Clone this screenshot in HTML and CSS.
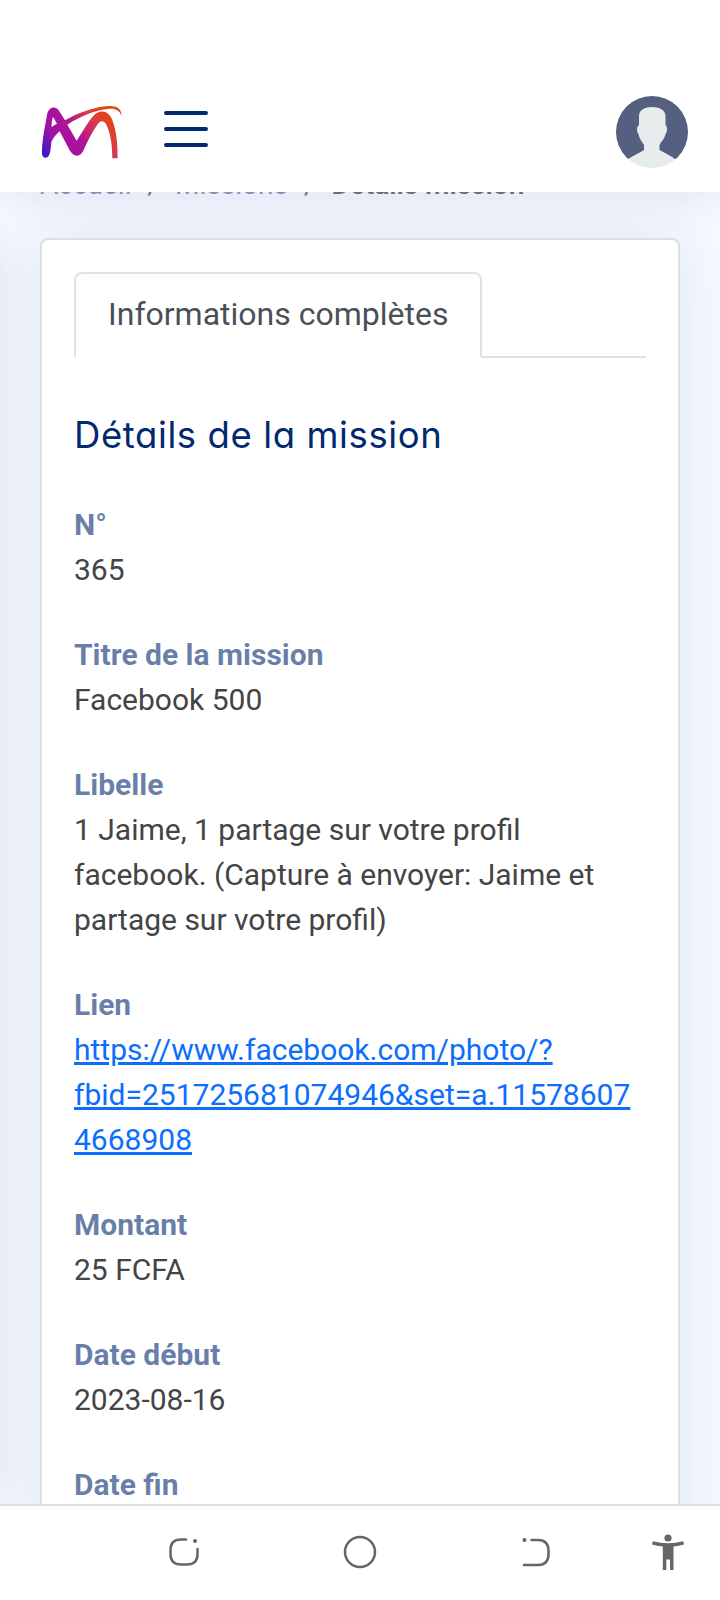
FILE: index.html
```html
<!DOCTYPE html>
<html lang="fr">
<head>
    <meta charset="utf-8">
    <title>Détails mission</title>
    <link rel="stylesheet" href="styles.css">
</head>
<body>
    <header class="header">
        <svg class="logo" viewBox="0 0 250 170">
            <defs>
                <linearGradient id="brand" gradientUnits="userSpaceOnUse" x1="5" y1="140" x2="190" y2="10">
                    <stop offset="0" stop-color="#3a1acb"/>
                    <stop offset=".25" stop-color="#a011a8"/>
                    <stop offset=".52" stop-color="#b01396"/>
                    <stop offset=".8" stop-color="#dc3b48"/>
                    <stop offset="1" stop-color="#e2450f"/>
                </linearGradient>
            </defs>
            <path fill="url(#brand)" d="M3 143C2 110 12 60 18 27C22 2 44 -2 54 14L72 43C110 21 160 2 203 0C230-1 243 11 241 29C236 12 222 6 199 9C160 13 114 33 79 56L107 104C126 76 148 34 166 22C190 8 209 23 216 48C226 76 230 112 230 157H214C214 116 208 78 195 54C188 42 178 43 170 55C153 78 139 108 127 134C116 154 98 154 86 133L56 76C45 86 35 98 31 108C30 122 29 134 26 143C22 160 4 159 3 143ZM32 63C39 58 44 54 48 53L36 32C33 41 31 53 32 63Z"/>
        </svg>
        <svg class="menu-btn" viewBox="0 0 44 36">
            <path d="M2 2H42M2 18H42M2 34H42"/>
        </svg>
        <svg class="avatar" viewBox="0 0 72 72">
            <clipPath id="round"><circle cx="36" cy="36" r="36"/></clipPath>
            <g clip-path="url(#round)">
                <path fill="#556080" d="M0 0H72V63H0Z"/>
                <path fill="#e7eced" d="M23 20C23 14 29 11 36 11S49.500 14 49.500 20V29C51.500 30 51.500 36 49.500 38C49 42 45 46 43.500 49V54C49 57 55 60 59 63V74H12V63C17 60 23 57 28 54V49C26 46 23 42 22.500 38C20.500 36 20.500 30 23 29Z"/>
            </g>
        </svg>
    </header>

    <main class="main">
        <div class="sidebar"></div>
        <nav class="breadcrumb">
            <a href="#">Accueil</a><span>/</span><a href="#">Missions</a><span>/</span><b>Détails mission</b>
        </nav>
        <section class="card">
            <div class="tabs">
                <div class="tab">Informations complètes</div>
            </div>
            <h5 class="card-title">Détails de la mission</h5>
            <dl class="details">
                <div class="row">
                    <dt>N°</dt>
                    <dd>365</dd>
                </div>
                <div class="row">
                    <dt>Titre de la mission</dt>
                    <dd>Facebook 500</dd>
                </div>
                <div class="row">
                    <dt>Libelle</dt>
                    <dd>1 Jaime, 1 partage sur votre profil facebook. (Capture à envoyer: Jaime et partage sur votre profil)</dd>
                </div>
                <div class="row">
                    <dt>Lien</dt>
                    <dd><a href="#">https://www.facebook.com/photo/?<wbr>fbid=251725681074946&amp;set=a.115786074668908</a></dd>
                </div>
                <div class="row">
                    <dt>Montant</dt>
                    <dd>25 FCFA</dd>
                </div>
                <div class="row">
                    <dt>Date début</dt>
                    <dd>2023-08-16</dd>
                </div>
                <div class="row">
                    <dt>Date fin</dt>
                </div>
            </dl>
        </section>
    </main>

    <footer class="navbar">
        <svg viewBox="0 0 36 36">
            <path d="M20 5.500H15Q4.500 5.500 4.500 16V20Q4.500 30.500 15 30.500H21Q31.500 30.500 31.500 20V15"/>
            <circle class="solid" cx="29" cy="7" r="2"/>
        </svg>
        <svg viewBox="0 0 36 36">
            <circle cx="18" cy="18" r="15"/>
        </svg>
        <svg viewBox="0 0 36 36">
            <path d="M13.500 6H20Q30.500 6 30.500 17V20Q30.500 31 20 31H6"/>
            <circle class="solid" cx="6.500" cy="6" r="2"/>
        </svg>
        <svg viewBox="0 0 36 36">
            <path class="solid" d="M2.800 7.200Q18 11.500 33.300 7.200L34 10.400Q29 12 23.500 12.500V36H20V25.500H16.300V36H12.800V12.500Q7 12 2 10.400Z"/>
            <circle class="solid" cx="18" cy="4" r="3.600"/>
        </svg>
    </footer>
</body>
</html>
```

FILE: styles.css
```css
* {
    box-sizing: border-box;
}

body {
    margin: 0;
    height: 1600px;
    display: flex;
    flex-direction: column;
    overflow: hidden;
    background: #f6f9ff;
    color: #444;
    font-family: Roboto, sans-serif;
    font-size: 30px;
    line-height: 45px;
}

.header {
    height: 192px;
    flex-shrink: 0;
    display: flex;
    align-items: flex-start;
    padding: 96px 32px 0 41px;
    background: #fff;
    box-shadow: 0 4px 40px rgba(1, 41, 112, 0.1);
    z-index: 2;
}

.logo {
    width: 83.300px;
    height: 56.700px;
    margin-top: 10px;
}

.menu-btn {
    width: 44px;
    height: 36px;
    margin: 15px 0 0 39.700px;
    fill: none;
    stroke: #012970;
    stroke-width: 4;
    stroke-linecap: round;
}

.avatar {
    width: 72px;
    height: 72px;
    margin-left: auto;
}

.main {
    position: relative;
    flex: 1;
    min-height: 0;
    padding: 0 40px;
    overflow: hidden;
}

/* closed sidebar, only its shadow reaches the page */
.sidebar {
    position: absolute;
    top: 50px;
    bottom: 10px;
    left: -600px;
    width: 600px;
    box-shadow: 0 0 40px rgba(1, 41, 112, 0.1);
}

.breadcrumb {
    display: flex;
    gap: 16px;
    height: 46px;
    margin-top: -30px;
    margin-bottom: 30px;
    font-size: 28px;
    line-height: 46px;
    color: #6c757d;
}

.breadcrumb a {
    color: #899bbd;
    text-decoration: none;
}

.breadcrumb b {
    color: #6c757d;
    font-weight: 600;
}

.card {
    position: relative;
    height: 1500px;
    padding: 32px;
    background: #fff;
    border: 2px solid #dfdfdf;
    border-radius: 8px;
    box-shadow: 0 0 60px rgba(1, 41, 112, 0.1);
}

.tabs {
    display: flex;
    border-bottom: 2px solid #dee2e6;
}

.tab {
    height: 86px;
    margin-bottom: -2px;
    padding: 16px 32px;
    background: #fff;
    border: 2px solid #dee2e6;
    border-bottom-color: #fff;
    border-radius: 8px 8px 0 0;
    color: #495057;
    font-size: 32px;
    line-height: 48px;
}

.card-title {
    margin: 53px 0 43px;
    color: #012970;
    font-family: Inter, sans-serif;
    font-size: 36.500px;
    font-weight: 400;
    line-height: 48px;
    letter-spacing: 0.6px;
    font-feature-settings: "cv11";
    white-space: nowrap;
}

.details {
    display: flex;
    flex-direction: column;
    gap: 40px;
    margin: 0;
}

.row dt {
    color: rgba(1, 41, 112, 0.6);
    font-weight: 700;
}

.row dd {
    margin: 0;
    overflow-wrap: anywhere;
}

.row a {
    color: #0d6efd;
    text-decoration-thickness: 3px;
}

.navbar {
    height: 96px;
    flex-shrink: 0;
    display: grid;
    grid-template-columns: 176px 176px 176px 88px;
    place-items: center;
    padding: 0 0 2px 96px;
    background: #fff;
    border-top: 2px solid #e0e0e0;
    z-index: 2;
}

.navbar svg {
    width: 36px;
    height: 36px;
    fill: none;
    stroke: #666;
    stroke-width: 2.500;
    stroke-linecap: round;
}

.navbar .solid {
    fill: #666;
    stroke: none;
}
```
